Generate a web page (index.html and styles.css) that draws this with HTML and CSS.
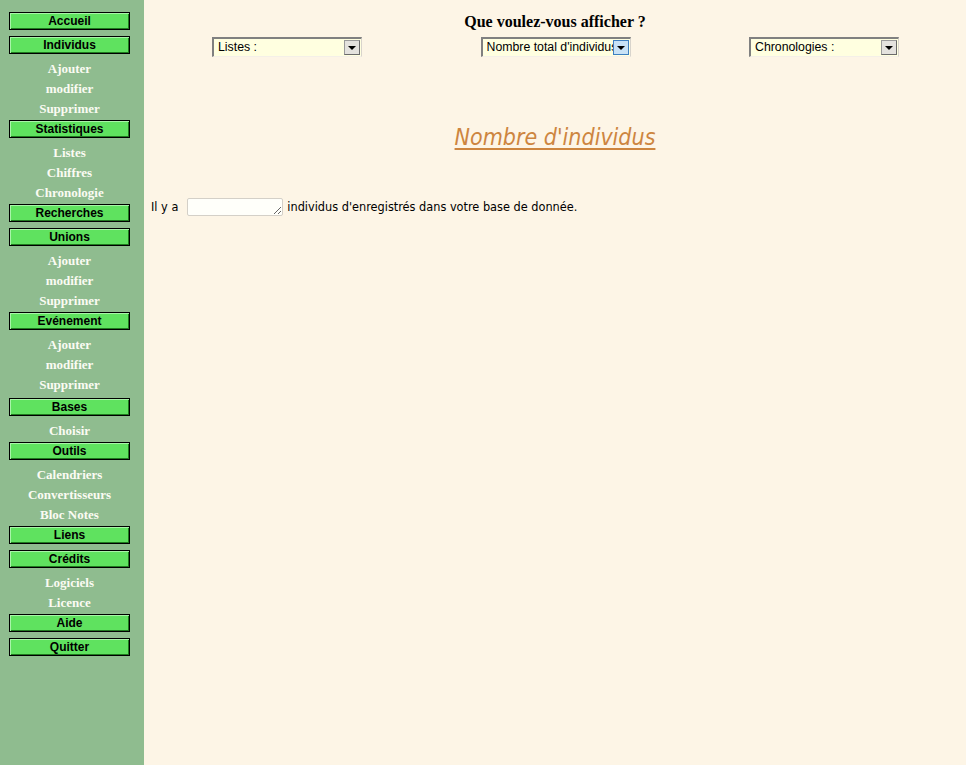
FILE: index.html
```html
<!DOCTYPE html>
<html lang="fr">
<head>
<meta charset="utf-8">
<title>Nombre d'individus</title>
<link rel="stylesheet" href="styles.css">
</head>
<body>
<nav class="sidebar">
  <a class="btn" href="#">Accueil</a>
  <a class="btn" href="#">Individus</a>
  <a class="sub" href="#">Ajouter</a>
  <a class="sub" href="#">modifier</a>
  <a class="sub" href="#">Supprimer</a>
  <a class="btn" href="#">Statistiques</a>
  <a class="sub" href="#">Listes</a>
  <a class="sub" href="#">Chiffres</a>
  <a class="sub" href="#">Chronologie</a>
  <a class="btn" href="#">Recherches</a>
  <a class="btn" href="#">Unions</a>
  <a class="sub" href="#">Ajouter</a>
  <a class="sub" href="#">modifier</a>
  <a class="sub" href="#">Supprimer</a>
  <a class="btn" href="#">Evénement</a>
  <a class="sub" href="#">Ajouter</a>
  <a class="sub" href="#">modifier</a>
  <a class="sub" href="#">Supprimer</a>
  <a class="btn btn-spaced" href="#">Bases</a>
  <a class="sub" href="#">Choisir</a>
  <a class="btn" href="#">Outils</a>
  <a class="sub" href="#">Calendriers</a>
  <a class="sub" href="#">Convertisseurs</a>
  <a class="sub" href="#">Bloc Notes</a>
  <a class="btn" href="#">Liens</a>
  <a class="btn" href="#">Crédits</a>
  <a class="sub" href="#">Logiciels</a>
  <a class="sub" href="#">Licence</a>
  <a class="btn" href="#">Aide</a>
  <a class="btn" href="#">Quitter</a>
</nav>
<main class="content">
  <h2 class="question">Que voulez-vous afficher ?</h2>
  <div class="selects">
    <div class="combo">
      <select class="combo-select"><option>Listes :</option></select>
      <span class="combo-arrow"></span>
    </div>
    <div class="combo">
      <select class="combo-select"><option>Nombre total d'individus</option></select>
      <span class="combo-arrow focused"></span>
    </div>
    <div class="combo">
      <select class="combo-select"><option>Chronologies :</option></select>
      <span class="combo-arrow"></span>
    </div>
  </div>
  <h1 class="title"><span class="title-text">Nombre d'individus</span></h1>
  <p class="count">Il y a <textarea class="count-box" rows="1"></textarea> individus d'enregistrés dans votre base de donnée.</p>
</main>
</body>
</html>
```

FILE: styles.css
```css
html, body {
  margin: 0;
  height: 100%;
}
body {
  display: flex;
  background: #fdf5e6;
  min-height: 765px;
}
.sidebar {
  width: 144px;
  flex: none;
  background: #8fbc8f;
  padding: 11px 0 0 9px;
  box-sizing: border-box;
  display: flex;
  flex-direction: column;
  align-items: flex-start;
}
.btn {
  display: block;
  box-sizing: border-box;
  width: 121px;
  height: 18px;
  margin: 1px 0 5px;
  background: #5fe25f;
  border: 1px solid #000;
  box-shadow: inset 1px 1px 0 #a8f5a8, inset -1px -1px 0 #1f7a1f;
  color: #000;
  text-decoration: none;
  text-align: center;
  font: bold 12px/16px "Liberation Sans", Arial, sans-serif;
}
.btn-spaced {
  margin-top: 3px;
}
.sub {
  display: block;
  width: 121px;
  height: 20px;
  text-align: center;
  color: #fbfbf3;
  text-decoration: none;
  font: bold 13px/20px "Liberation Serif", serif;
}
.content {
  flex: 1;
  min-width: 0;
}
.question {
  margin: 12px 0 0;
  text-align: center;
  font: bold 16px/20px "Liberation Serif", serif;
  color: #000;
}
.selects {
  display: flex;
  justify-content: space-between;
  padding: 0 67px 0 68px;
  margin-top: 5px;
}
.combo {
  display: flex;
  align-items: center;
  width: 150px;
  height: 20px;
  box-sizing: border-box;
  border-top: 2px solid #808080;
  border-left: 2px solid #808080;
  border-right: 1px solid #d8d4cc;
  border-bottom: 1px solid #f4f0e8;
  background: #ffffe0;
}
.combo-select {
  appearance: none;
  -webkit-appearance: none;
  flex: 1;
  min-width: 0;
  height: 17px;
  border: 0;
  padding: 0 0 0 4px;
  margin: 0;
  background: transparent;
  font: 12.3px/17px "Liberation Sans", Arial, sans-serif;
  color: #000;
  outline: none;
}
.combo-arrow {
  flex: none;
  position: relative;
  width: 16px;
  height: 15px;
  box-sizing: border-box;
  margin-right: 1px;
  background: #e4e2de;
  border: 1px solid #9a9a9a;
  border-right-color: #6a6a6a;
  border-bottom-color: #6a6a6a;
}
.combo-arrow::after {
  content: "";
  position: absolute;
  left: 3px;
  top: 5px;
  border-left: 4px solid transparent;
  border-right: 4px solid transparent;
  border-top: 4px solid #000;
}
.combo-arrow.focused {
  background: #c8e2f6;
  border-color: #3d7fc0;
}
.title {
  margin: 65px 0 0;
  text-align: center;
  font: italic normal 23px/30px "DejaVu Sans Condensed", "DejaVu Sans", sans-serif;
  color: #cd853f;
}
.title-text {
  text-decoration: underline;
  text-decoration-thickness: 2px;
  text-underline-offset: 3px;
}
.count {
  margin: 46px 0 0 7px;
  font: 12.6px/18px "DejaVu Sans Condensed", "DejaVu Sans", sans-serif;
  color: #000;
  display: flex;
  align-items: center;
}
.count-box {
  width: 96px;
  height: 18px;
  box-sizing: border-box;
  margin: 0 4px 0 9px;
  padding: 0;
  border: 1px solid #d4d0c8;
  border-radius: 2px;
  background: #fffffa;
  resize: both;
  overflow: hidden;
  font: 12px "DejaVu Sans", sans-serif;
}
```
